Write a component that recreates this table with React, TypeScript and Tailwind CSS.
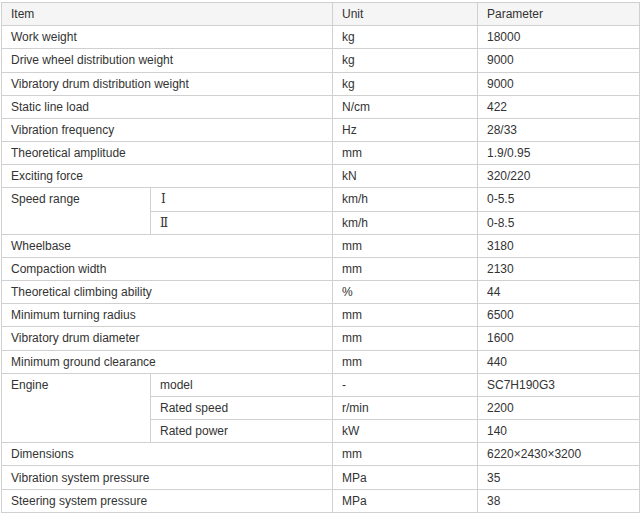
const rows: [string, string, string][] = [
  ['Work weight', 'kg', '18000'],
  ['Drive wheel distribution weight', 'kg', '9000'],
  ['Vibratory drum distribution weight', 'kg', '9000'],
  ['Static line load', 'N/cm', '422'],
  ['Vibration frequency', 'Hz', '28/33'],
  ['Theoretical amplitude', 'mm', '1.9/0.95'],
  ['Exciting force', 'kN', '320/220'],
];

const rows2: [string, string, string][] = [
  ['Wheelbase', 'mm', '3180'],
  ['Compaction width', 'mm', '2130'],
  ['Theoretical climbing ability', '%', '44'],
  ['Minimum turning radius', 'mm', '6500'],
  ['Vibratory drum diameter', 'mm', '1600'],
  ['Minimum ground clearance', 'mm', '440'],
];

const rows3: [string, string, string][] = [
  ['Dimensions', 'mm', '6220×2430×3200'],
  ['Vibration system pressure', 'MPa', '35'],
  ['Steering system pressure', 'MPa', '38'],
];

const td = 'border border-[#d0d0d0] px-[9px] py-0 align-middle';
const tdTop = 'border border-[#d0d0d0] px-[9px] pt-[4px] align-top';

function SimpleRow({ r }: { r: [string, string, string] }) {
  return (
    <tr className="h-[23.18px]">
      <td colSpan={2} className={td}>{r[0]}</td>
      <td className={td}>{r[1]}</td>
      <td className={td}>{r[2]}</td>
    </tr>
  );
}

export default function App() {
  return (
    <div className="bg-white w-[644px] h-[517px] pt-[2px] pl-[1px]">
      <table
        className="table-fixed border-collapse w-[638px] text-[12px] leading-[14px] text-[#333]"
        style={{ fontFamily: '"Liberation Sans", Arial, sans-serif' }}
      >
        <colgroup>
          <col className="w-[149px]" />
          <col className="w-[182px]" />
          <col className="w-[145px]" />
          <col className="w-[162px]" />
        </colgroup>
        <tbody>
          <tr className="h-[23.18px] bg-[#f5f5f5]">
            <td colSpan={2} className={td}>Item</td>
            <td className={td}>Unit</td>
            <td className={td}>Parameter</td>
          </tr>
          {rows.map((r) => (
            <SimpleRow key={r[0]} r={r} />
          ))}
          <tr className="h-[23.18px]">
            <td rowSpan={2} className={tdTop}>Speed range</td>
            <td className={td}>
              <span className="pl-[1px]" style={{ fontFamily: '"DejaVu Serif", serif' }}>Ⅰ</span>
            </td>
            <td className={td}>km/h</td>
            <td className={td}>0-5.5</td>
          </tr>
          <tr className="h-[23.18px]">
            <td className={td}>
              <span style={{ fontFamily: '"DejaVu Serif", serif' }}>Ⅱ</span>
            </td>
            <td className={td}>km/h</td>
            <td className={td}>0-8.5</td>
          </tr>
          {rows2.map((r) => (
            <SimpleRow key={r[0]} r={r} />
          ))}
          <tr className="h-[23.18px]">
            <td rowSpan={3} className={tdTop}>Engine</td>
            <td className={td}>model</td>
            <td className={td}>-</td>
            <td className={td}>SC7H190G3</td>
          </tr>
          <tr className="h-[23.18px]">
            <td className={td}>Rated speed</td>
            <td className={td}>r/min</td>
            <td className={td}>2200</td>
          </tr>
          <tr className="h-[23.18px]">
            <td className={td}>Rated power</td>
            <td className={td}>kW</td>
            <td className={td}>140</td>
          </tr>
          {rows3.map((r) => (
            <SimpleRow key={r[0]} r={r} />
          ))}
        </tbody>
      </table>
    </div>
  );
}
